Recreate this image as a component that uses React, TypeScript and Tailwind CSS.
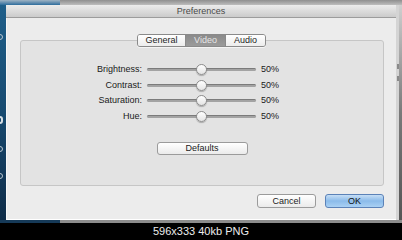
import React from "react";

const rows = ["Brightness:", "Contrast:", "Saturation:", "Hue:"];

function SliderRow({ label }: { label: string }) {
  return (
    <div className="flex items-center h-[15.5px]">
      <div className="w-[121px] text-right text-[9px] text-[#1a1a1a] leading-none">{label}</div>
      <div className="relative ml-[5px] w-[109px] h-[3px] rounded-full bg-[#a3a3a3] border-t border-[#7b7b7b]">
        <div className="absolute left-[49px] top-[-5px] w-[11px] h-[11px] rounded-full border border-[#8d8d8d] bg-gradient-to-b from-white to-[#e4e4e4] shadow-[0_1px_1px_rgba(0,0,0,0.25)]" />
      </div>
      <div className="ml-[5px] text-[9px] text-[#1a1a1a] leading-none">50%</div>
    </div>
  );
}

export default function App() {
  return (
    <div className="w-[402px] h-[240px] bg-black flex flex-col overflow-hidden font-['Liberation_Sans',Arial,sans-serif]">
      <div className="h-[5px] flex">
        <div className="w-[60px] bg-gradient-to-b from-[#9fb4c4] to-[#2b6d9c]" />
        <div className="flex-1 bg-gradient-to-b from-[#8f8f8f] to-[#bdbdbd]" />
      </div>
      <div className="h-[215px] flex">
        {/* desktop strip with clipped icon labels */}
        <div className="relative w-[6px] bg-gradient-to-b from-[#1f5f8a] via-[#174a70] to-[#0e2c48] overflow-hidden">
          <div className="absolute left-[-3px] top-[29px] w-[6px] h-[6px] rounded-full border border-[#b9c6d0]" />
          <div className="absolute left-[-3px] top-[111px] w-[6px] h-[8px] rounded-full border-2 border-[#d5dde3]" />
          <div className="absolute left-[-3px] top-[141px] w-[6px] h-[6px] rounded-full border border-[#b9c6d0]" />
          <div className="absolute left-[-3px] top-[168px] w-[6px] h-[6px] rounded-full border border-[#b9c6d0]" />
        </div>
        <div className="w-[390px] flex flex-col">
          <div className="h-[13px] flex items-center justify-center bg-gradient-to-b from-[#ececec] to-[#cbcbcb] border-b border-[#9c9c9c] text-[9px] text-[#4a4a4a] leading-none">
            Preferences
          </div>
          <div className="flex-1 flex flex-col bg-[#ececec] border-l border-[#f8f8f8] border-b border-b-white">
            <div className="relative z-10 mt-[16px] flex justify-center">
              <div className="flex h-[13px] rounded-[3px] border border-[#8a8a8a] overflow-hidden text-[9px] leading-none shadow-[0_1px_0_rgba(255,255,255,0.6)]">
                <div className="w-[48px] flex items-center justify-center bg-gradient-to-b from-white to-[#ececec] text-[#1c1c1c] border-r border-[#8a8a8a]">
                  General
                </div>
                <div className="w-[40px] flex items-center justify-center bg-gradient-to-b from-[#8a8a8a] to-[#9b9b9b] text-[#e6e6e6] border-r border-[#8a8a8a]">
                  Video
                </div>
                <div className="w-[39px] flex items-center justify-center bg-gradient-to-b from-white to-[#ececec] text-[#1c1c1c]">
                  Audio
                </div>
              </div>
            </div>
            <div className="-mt-[7px] ml-[13px] mr-[12px] h-[146px] rounded-[3px] border border-[#c6c6c6] bg-[#e3e3e3] pt-[21px] flex flex-col">
              {rows.map((r) => (
                <SliderRow key={r} label={r} />
              ))}
              <div className="mt-[18px] flex justify-center">
                <div className="w-[91px] h-[13px] rounded-[3px] border border-[#9b9b9b] bg-gradient-to-b from-white to-[#ebebeb] flex items-center justify-center text-[9px] text-[#1c1c1c] leading-none">
                  Defaults
                </div>
              </div>
            </div>
            <div className="mt-[8px] mr-[12px] flex justify-end gap-[9px]">
              <div className="w-[59px] h-[14px] rounded-[3px] border border-[#9b9b9b] bg-gradient-to-b from-white to-[#ebebeb] flex items-center justify-center text-[9px] text-[#1c1c1c] leading-none">
                Cancel
              </div>
              <div className="w-[59px] h-[14px] rounded-[3px] border border-[#5b82b8] bg-gradient-to-b from-[#c6def5] via-[#8bbbea] to-[#a9d0f3] flex items-center justify-center text-[9px] text-[#111] leading-none">
                OK
              </div>
            </div>
          </div>
        </div>
        {/* window behind, on the right */}
        <div className="relative w-[6px] flex overflow-hidden">
          <div className="w-[3px] bg-[#d4d4d4]" />
          <div className="flex-1 bg-gradient-to-b from-[#cfcfcf] via-[#7a7a7a] to-[#555]" />
          <div className="absolute left-[1px] top-[59px] w-[2px] h-[5px] bg-[#8a8a8a]" />
          <div className="absolute left-[1px] top-[71px] w-[2px] h-[5px] bg-[#8a8a8a]" />
        </div>
      </div>
      <div className="h-[3px] flex">
        <div className="w-[60px] bg-[#163a58]" />
        <div className="flex-1 bg-[#8c8c8c]" />
      </div>
      <div className="flex-1 flex items-center justify-center text-[11px] text-[#ececec] leading-none">
        596x333 40kb PNG
      </div>
    </div>
  );
}
